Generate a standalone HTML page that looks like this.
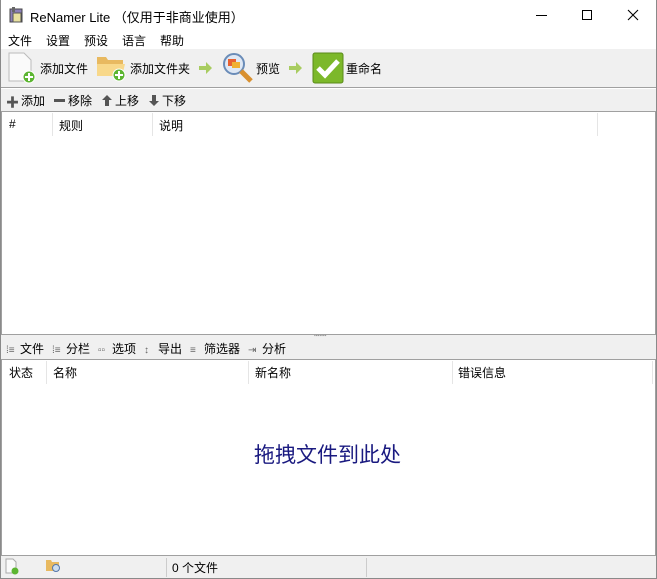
<!DOCTYPE html>
<html><head><meta charset="utf-8"><style>
*{margin:0;padding:0;box-sizing:border-box}
body{width:657px;height:579px;overflow:hidden;background:#fff;font-family:"Liberation Sans","Noto Sans CJK SC",sans-serif;font-size:12px;color:#000;position:relative}
.a{position:absolute}
.win{position:absolute;left:0;top:0;width:657px;height:579px;border:1px solid #8a8a8a;border-top:none}
.t{position:absolute;white-space:nowrap}
.ic{display:inline-block;width:14px;color:#666;font-size:10px}
</style></head><body>
<div class="a" style="left:0;top:0;width:657px;height:31px;background:#fff"></div>
<svg class="a" style="left:8px;top:6px" width="18" height="18" viewBox="0 0 18 18"><rect x="2" y="3" width="12" height="13" fill="#8c7fb8" stroke="#444"/><rect x="5" y="7" width="8" height="9" fill="#e8e0a0" stroke="#555"/><rect x="4" y="1" width="3" height="5" fill="#666"/></svg>
<div class="t" style="left:30px;top:7px;font-size:13px">ReNamer Lite （仅用于非商业使用）</div>
<div class="a" style="left:536px;top:15px;width:11px;height:1px;background:#000"></div>
<div class="a" style="left:582px;top:10px;width:10px;height:10px;border:1px solid #000"></div>
<svg class="a" style="left:627px;top:9px" width="12" height="12"><path d="M1 1L11 11M11 1L1 11" stroke="#000" stroke-width="1.1"/></svg>
<div class="t" style="left:8px;top:32px">文件</div>
<div class="t" style="left:46px;top:32px">设置</div>
<div class="t" style="left:84px;top:32px">预设</div>
<div class="t" style="left:122px;top:32px">语言</div>
<div class="t" style="left:160px;top:32px">帮助</div>
<div class="a" style="left:0;top:49px;width:657px;height:39px;background:#f0f0f0;border-bottom:1px solid #a0a0a0"></div>
<svg class="a" style="left:7px;top:52px" width="30" height="32"><path d="M2 1H17L24 8V29H2Z" fill="#fafafa" stroke="#bbb"/><circle cx="22" cy="25" r="6" fill="#5cb531" stroke="#fff"/><path d="M22 21V29M18 25H26" stroke="#fff" stroke-width="2"/></svg>
<div class="t" style="left:40px;top:60px">添加文件</div>
<svg class="a" style="left:96px;top:54px" width="32" height="28"><path d="M1 3H10L12 6H27V22H1Z" fill="#e8b960"/><path d="M1 10H29L26 22H1Z" fill="#f8d88a"/><circle cx="23" cy="21" r="6" fill="#5cb531" stroke="#fff"/><path d="M23 17V25M19 21H27" stroke="#fff" stroke-width="2"/></svg>
<div class="t" style="left:130px;top:60px">添加文件夹</div>
<svg class="a" style="left:199px;top:62px" width="14" height="12"><path d="M0 4H7V0L13 6L7 12V8H0Z" fill="#a8cc60"/></svg>
<svg class="a" style="left:222px;top:52px" width="32" height="32"><circle cx="12" cy="12" r="10" fill="#dfe8f4" stroke="#6a8cb8" stroke-width="2"/><rect x="6" y="7" width="8" height="7" fill="#e86030"/><rect x="10" y="10" width="8" height="6" fill="#f0b030"/><path d="M19 19L29 29" stroke="#d89030" stroke-width="5"/></svg>
<div class="t" style="left:256px;top:60px">预览</div>
<svg class="a" style="left:289px;top:62px" width="14" height="12"><path d="M0 4H7V0L13 6L7 12V8H0Z" fill="#a8cc60"/></svg>
<svg class="a" style="left:312px;top:52px" width="32" height="32"><rect x="1" y="1" width="30" height="30" rx="2" fill="#7cb82a" stroke="#5a8a1a"/><path d="M6 16L13 23L26 9" stroke="#fff" stroke-width="5" fill="none"/></svg>
<div class="t" style="left:346px;top:60px">重命名</div>
<div class="a" style="left:0;top:89px;width:657px;height:22px;background:#f0f0f0"></div>
<div class="t" style="left:6px;top:92px;color:#555;font-size:13px;font-weight:bold">✚</div>
<div class="t" style="left:21px;top:92px">添加</div>
<div class="a" style="left:54px;top:99px;width:11px;height:3px;background:#555"></div>
<div class="t" style="left:68px;top:92px">移除</div>
<svg class="a" style="left:102px;top:95px" width="10" height="11"><path d="M5 0L10 5H7V11H3V5H0Z" fill="#555"/></svg>
<div class="t" style="left:115px;top:92px">上移</div>
<svg class="a" style="left:149px;top:95px" width="10" height="11"><path d="M5 11L10 6H7V0H3V6H0Z" fill="#555"/></svg>
<div class="t" style="left:162px;top:92px">下移</div>
<div class="a" style="left:1px;top:111px;width:655px;height:224px;border:1px solid #a0a0a0;background:#fff"></div>
<div class="a" style="left:52px;top:113px;width:1px;height:23px;background:#e5e5e5"></div>
<div class="a" style="left:152px;top:113px;width:1px;height:23px;background:#e5e5e5"></div>
<div class="a" style="left:597px;top:113px;width:1px;height:23px;background:#e5e5e5"></div>
<div class="t" style="left:9px;top:117px">#</div>
<div class="t" style="left:59px;top:117px">规则</div>
<div class="t" style="left:159px;top:117px">说明</div>
<div class="a" style="left:0;top:335px;width:657px;height:25px;background:#f0f0f0"></div>
<div class="t" style="left:314px;top:333px;font-size:5px;color:#999">▪▪▪▪▪▪▪</div>
<div class="t" style="left:6px;top:340px"><span class="ic">⁞≡</span>文件</div>
<div class="t" style="left:52px;top:340px"><span class="ic">⁞≡</span>分栏</div>
<div class="t" style="left:98px;top:340px"><span class="ic">▫▫</span>选项</div>
<div class="t" style="left:144px;top:340px"><span class="ic">↕</span>导出</div>
<div class="t" style="left:190px;top:340px"><span class="ic">≡</span>筛选器</div>
<div class="t" style="left:248px;top:340px"><span class="ic">⇥</span>分析</div>
<div class="a" style="left:1px;top:359px;width:655px;height:197px;border:1px solid #a0a0a0;background:#fff"></div>
<div class="a" style="left:46px;top:361px;width:1px;height:23px;background:#e5e5e5"></div>
<div class="a" style="left:248px;top:361px;width:1px;height:23px;background:#e5e5e5"></div>
<div class="a" style="left:452px;top:361px;width:1px;height:23px;background:#e5e5e5"></div>
<div class="a" style="left:652px;top:361px;width:1px;height:23px;background:#e5e5e5"></div>
<div class="t" style="left:9px;top:364px">状态</div>
<div class="t" style="left:53px;top:364px">名称</div>
<div class="t" style="left:255px;top:364px">新名称</div>
<div class="t" style="left:458px;top:364px">错误信息</div>
<div class="t" style="left:254px;top:439px;font-size:21px;color:#1a1a80">拖拽文件到此处</div>
<div class="a" style="left:0;top:556px;width:657px;height:23px;background:#f0f0f0"></div>
<div class="a" style="left:166px;top:558px;width:1px;height:19px;background:#ccc"></div>
<div class="a" style="left:366px;top:558px;width:1px;height:19px;background:#ccc"></div>
<svg class="a" style="left:5px;top:558px" width="14" height="17"><path d="M1 1H8L11 4V15H1Z" fill="#fafafa" stroke="#aaa"/><circle cx="10" cy="13" r="3.5" fill="#5cb531"/></svg>
<svg class="a" style="left:45px;top:558px" width="18" height="16"><path d="M1 2H6L7 4H14V13H1Z" fill="#e8b960"/><circle cx="11" cy="10" r="3.5" fill="#cde" stroke="#57a"/></svg>
<div class="t" style="left:172px;top:559px">0 个文件</div>
<div class="win"></div>
</body></html>
